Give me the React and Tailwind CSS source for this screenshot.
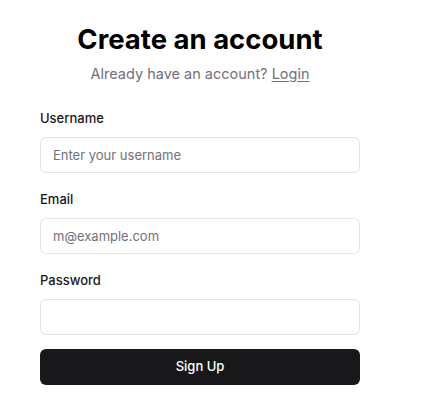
import { useState } from "react";

const Field = ({ label, type, placeholder, value, onChange }) => {
  return (
    <div className="flex flex-col">
      <label className="text-[13px] font-medium leading-5 text-[#18181b]">{label}</label>
      <input
        type={type}
        value={value}
        onChange={onChange}
        placeholder={placeholder}
        className="mt-[9px] h-9 w-full rounded-md border border-[#e4e4e7] bg-white px-3 text-[13px] text-[#18181b] placeholder:text-[#71717a] outline-none"
      />
    </div>
  );
};

const App = () => {
  const [form, setForm] = useState({ username: "", email: "", password: "" });

  const update = (key) => (e) => setForm({ ...form, [key]: e.target.value });

  return (
    <div className="min-h-screen bg-white" style={{ fontFamily: "Inter, 'Noto Sans', sans-serif" }}>
      <div className="w-80 ml-10 pt-[23px]">
        <h1 className="text-center text-[27.5px] font-bold leading-8 text-black">Create an account</h1>
        <p className="mt-[9px] text-center text-[14.5px] leading-5 text-[#71717a]">
          Already have an account?{" "}
          <a href="#" className="underline underline-offset-2">Login</a>
        </p>
        <form className="mt-6 flex flex-col gap-4" onSubmit={(e) => e.preventDefault()}>
          <Field label="Username" type="text" placeholder="Enter your username" value={form.username} onChange={update("username")} />
          <Field label="Email" type="email" placeholder="m@example.com" value={form.email} onChange={update("email")} />
          <Field label="Password" type="password" placeholder="" value={form.password} onChange={update("password")} />
          <button type="submit" className="-mt-[2px] h-9 w-full rounded-md bg-[#18181b] text-[13px] font-medium text-white">
            Sign Up
          </button>
        </form>
      </div>
    </div>
  );
};

export default App;
